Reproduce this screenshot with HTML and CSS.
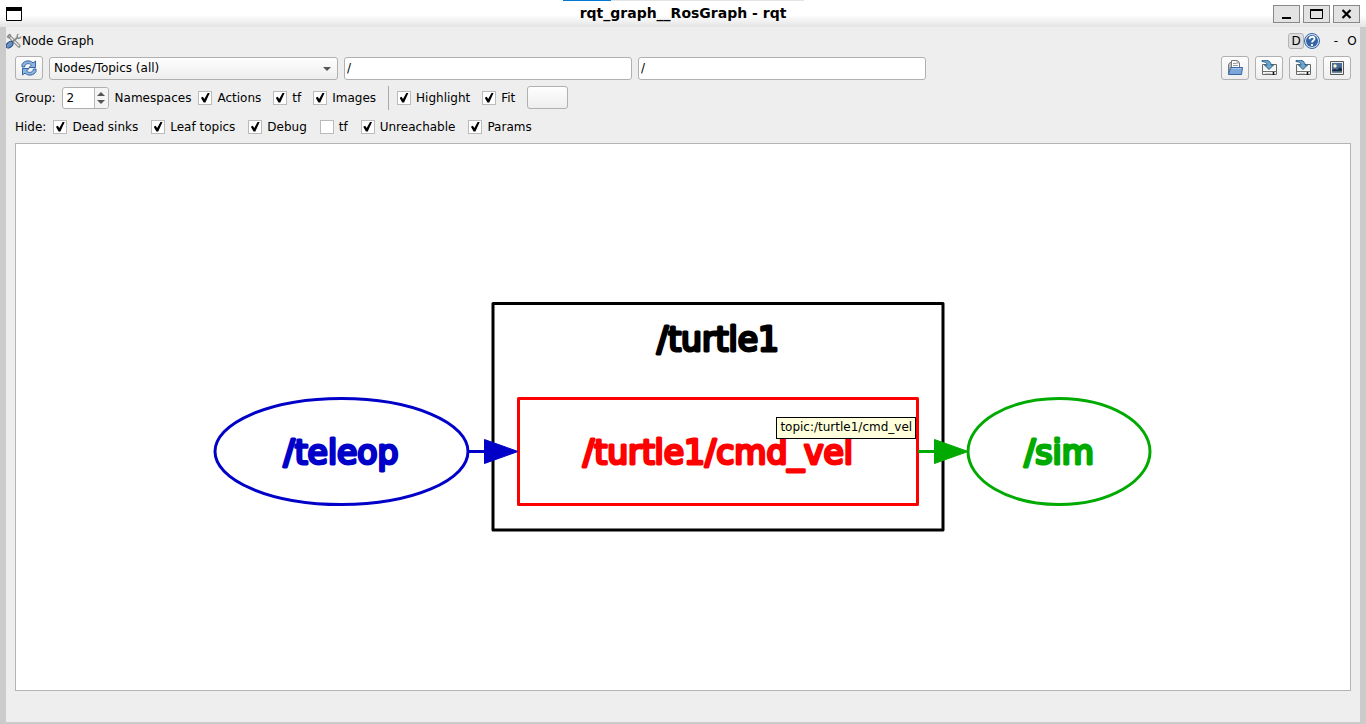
FILE: index.html
```html
<!DOCTYPE html>
<html lang="en">
<head>
<meta charset="utf-8">
<meta name="viewport" content="width=device-width, initial-scale=1">
<title>rqt_graph__RosGraph - rqt</title>
<link rel="stylesheet" href="styles.css">
</head>
<body>
<svg class="defs" width="0" height="0" aria-hidden="true">
  <symbol id="save" viewBox="0 0 16 16">
    <path d="M1.500 4.500H5M10 4.500H15.500V14.500H1.500V4.500" fill="#f4f4f2" stroke="#666b68"/>
    <path d="M3 10.500H14" stroke="#fff"/>
    <path d="M2 11.500H15" stroke="#6b706c"/>
    <path d="M4 13.500H10" stroke="#ccc"/>
    <path d="M12.500 12V15" stroke="#111" stroke-width="1.600"/>
    <path d="M1 .5C5-.5 10 .5 10 5H12.500L8 9.500 3.500 5H6C6 3 4 1.500 1 1.500Z" fill="#6fa5cb" stroke="#255f8d"/>
  </symbol>
</svg>
<div class="window">
  <header class="titlebar">
    <span class="progress"></span>
    <svg class="app-icon" width="16" height="14" viewBox="0 0 16 14"><path d="M.5.5H15.500V13.500H.5Z" fill="#fff" stroke="#000"/><path d="M0 0H16V4H0Z"/></svg>
    <h1 class="title">rqt_graph__RosGraph - rqt</h1>
    <div class="window-buttons">
      <button class="win-btn" aria-label="Minimize"><svg width="25" height="16" viewBox="0 0 25 16"><path d="M8 11H17V13H8Z"/></svg></button>
      <button class="win-btn" aria-label="Maximize"><svg width="25" height="16" viewBox="0 0 25 16"><path d="M6.500 3.500H18.500V12.500H6.500Z" fill="none" stroke="#000"/><path d="M6 3H19V5H6Z"/></svg></button>
      <button class="win-btn" aria-label="Close"><svg width="25" height="16" viewBox="0 0 25 16"><path d="M8.500 4L16.500 12M16.500 4L8.500 12" stroke="#000" stroke-width="2.200"/></svg></button>
    </div>
  </header>
  <div class="dock">
    <div class="dock-title">
      <svg width="16" height="16" viewBox="0 0 16 16"><path d="M3 3L13 13" stroke="#888a85" stroke-width="3.200" stroke-linecap="round"/><path d="M3 3L13 13" stroke="#eee" stroke-width="1.300"/><path d="M1 3.500C3 6 6 3 3.500 1" fill="none" stroke="#888a85" stroke-width="1.400"/><path d="M7 8.500L12 4" stroke="#888a85" stroke-width="1.800"/><path d="M12.500 1C10.500 2 11 4 12 5S14.500 5 15 3.500" fill="none" stroke="#888a85" stroke-width="1.300"/><ellipse cx="3.500" cy="11.800" rx="4" ry="2.600" transform="rotate(-42 3.500 11.800)" fill="#6d91bf" stroke="#204a87"/></svg>
      <span class="dock-name">Node Graph</span>
      <button class="mini raised">D</button>
      <button class="help" aria-label="Help"><svg width="16" height="16" viewBox="0 0 16 16"><circle cx="8" cy="8" r="7.500" fill="#d7e3f2" stroke="#3465a4"/><circle cx="8" cy="8" r="6" fill="#3465a4"/><path d="M5.500 6.200C5.500 3 10.700 3 10.500 6 10.400 7.500 8 7.600 8 9.600M8 11V13" fill="none" stroke="#fff" stroke-width="1.800"/></svg></button>
      <button class="mini dash">-</button>
      <button class="mini">O</button>
    </div>
    <div class="row row-main">
      <button class="tool" aria-label="Refresh graph"><svg width="16" height="16" viewBox="0 0 16 16"><path d="M1 7V4.500C3 .5 9-.5 12 3L14.500 1V7.500H8L10.500 5C8 2.500 4 3.500 3.500 7Z" fill="#8db4dd" stroke="#3465a4"/><path d="M15 9V11.500C13 15.500 7 16.500 4 13L1.500 15V8.500H8L5.500 11C8 13.500 12 12.500 12.500 9Z" fill="#8db4dd" stroke="#3465a4"/></svg></button>
      <div class="combo"><select aria-label="Graph type"><option>Nodes/Topics (all)</option></select></div>
      <input class="field" type="text" value="/" aria-label="Node filter">
      <input class="field" type="text" value="/" aria-label="Topic filter">
      <div class="file-tools">
        <button class="tool" aria-label="Open"><svg width="16" height="16" viewBox="0 0 16 16"><path d="M1.500 14V4.500L3 2.500H5" fill="#bbb" stroke="#777"/><path d="M4.500 9V.5H10.500L12.500 3V9Z" fill="#fff" stroke="#777"/><path d="M6 3.500H9.500M6 5.500H11M10 .5V3H12.500" fill="none" stroke="#999"/><path d="M3.500 7.500H15.500L14.500 14.500H1.500Z" fill="#7da7d9" stroke="#3465a4"/><path d="M4.500 8.500H14.500" stroke="#a9c7e8"/></svg></button>
        <button class="tool" aria-label="Save as DOT"><svg width="16" height="16"><use href="#save"/></svg></button>
        <button class="tool" aria-label="Save as SVG"><svg width="16" height="16"><use href="#save"/></svg></button>
        <button class="tool" aria-label="Save as image"><svg width="16" height="16" viewBox="0 0 16 16"><path d="M1.500 1.500H14.500V14.500H1.500Z" fill="#eee" stroke="#555753"/><path d="M3 3H13V12.500H3Z" fill="#4a6c9b"/><path d="M3 10L6 9 8 10 11 7 13 9V12.500H3Z" fill="#1b2a3e"/><path d="M3 12H13" stroke="#8ca8c4"/><circle cx="6" cy="6" r="1.700" fill="#fff6c0"/></svg></button>
      </div>
    </div>
    <div class="row row-group">
      <label for="depth">Group:</label>
      <div class="spin"><input id="depth" type="number" value="2"><span class="arrows"><i class="up"></i><i class="down"></i></span></div>
      <span class="namespaces">Namespaces</span>
      <div class="checks">
        <label class="check"><input type="checkbox" checked>Actions</label>
        <label class="check"><input type="checkbox" checked>tf</label>
        <label class="check"><input type="checkbox" checked>Images</label>
        <span class="divider"></span>
        <label class="check"><input type="checkbox" checked>Highlight</label>
        <label class="check"><input type="checkbox" checked>Fit</label>
        <button class="blank" aria-label="Fit in view"></button>
      </div>
    </div>
    <div class="row row-hide">
      <span class="hide-label">Hide:</span>
      <div class="checks">
        <label class="check"><input type="checkbox" checked>Dead sinks</label>
        <label class="check"><input type="checkbox" checked>Leaf topics</label>
        <label class="check"><input type="checkbox" checked>Debug</label>
        <label class="check"><input type="checkbox">tf</label>
        <label class="check"><input type="checkbox" checked>Unreachable</label>
        <label class="check"><input type="checkbox" checked>Params</label>
      </div>
    </div>
    <main class="canvas">
      <svg class="graph" viewBox="16 144 1334 546">
        <g class="shape black"><path d="M493 303.500H943V530H493Z"/><text x="718" y="351">/turtle1</text></g>
        <g class="shape red"><path d="M518.500 398.500H917.500V504.500H518.500Z"/><text x="718" y="464">/turtle1/cmd_vel</text></g>
        <g class="shape blue"><ellipse cx="341.500" cy="451.500" rx="126.500" ry="53"/><path d="M468 451.500H490"/><path class="head" d="M484.500 439.500L518 451.500 484.500 463.500Z"/><text x="341" y="464">/teleop</text></g>
        <g class="shape green"><ellipse cx="1059" cy="451.500" rx="91" ry="53"/><path d="M918 451.500H940"/><path class="head" d="M934.500 439.500L968 451.500 934.500 463.500Z"/><text x="1059" y="464">/sim</text></g>
      </svg>
      <div class="tooltip" role="tooltip">topic:/turtle1/cmd_vel</div>
    </main>
  </div>
</div>
</body>
</html>
```
FILE: styles.css
```css
* { box-sizing: border-box; }

body {
  margin: 0;
  background: #cbcbcb;
  color: #000;
  font-family: "DejaVu Sans", sans-serif;
  font-size: 12px;
  line-height: 14px;
}

button, input, select { font: inherit; color: inherit; margin: 0; }
button { padding: 0; }
svg { display: block; }
.defs { position: absolute; }

.window { display: flex; flex-direction: column; height: 100vh; }

.titlebar {
  position: relative;
  display: grid;
  grid-template-columns: 1fr auto 1fr;
  align-items: center;
  height: 27px;
  padding: 0 6px;
  background: linear-gradient(#fff 0, #fff 55%, #e4e4e4 100%);
}
.title { margin: 0; font-size: 14px; line-height: 27px; font-weight: bold; }
.window-buttons { display: flex; gap: 3px; justify-self: end; padding-top: 1px; }
.win-btn { border: 1px solid #888; background: #e3e3e3; }

.progress {
  position: absolute;
  top: 0;
  left: 50%;
  width: 241px;
  height: 1px;
  margin-left: -120px;
  background: linear-gradient(90deg, #0078d7 48px, #e4e4e4 48px);
}

.dock {
  flex: 1;
  display: flex;
  flex-direction: column;
  min-height: 0;
  margin: 0 6px 2px;
  padding: 0 9px 31px;
  background: #eee;
}

.dock-title { display: flex; align-items: center; height: 27px; margin: 0 -9px; }
.dock-name { flex: 1; }
.mini { border: 0; background: none; height: 16px; min-width: 16px; }
.raised { border: 1px solid #b4b4b4; border-radius: 3px; background: #dedede; line-height: 14px; }
.help { border: 0; background: none; }
.dash { margin-left: 8px; }

.row { display: flex; align-items: center; }
.row-main { gap: 6px; height: 28px; }
.row-group { height: 31px; }
.row-hide { height: 27px; }

.tool, .combo, .field, .spin, .blank {
  border: 1px solid #b0b0b0;
  border-radius: 3px;
  background: linear-gradient(#fefefe, #eee);
}
.tool { display: grid; place-items: center; width: 28px; height: 24px; flex: none; }
.combo { position: relative; flex: 0 1 289px; height: 23px; }
.combo select {
  display: block;
  width: 100%;
  height: 20px;
  padding: 0 4px;
  border: 0;
  background: none;
  appearance: none;
}
.combo::after {
  content: "";
  position: absolute;
  top: 9px;
  right: 6px;
  border: 4px solid transparent;
  border-top-color: #555;
  border-bottom: 0;
  pointer-events: none;
}
.field { flex: 0 1 288px; min-width: 0; height: 23px; padding: 0 2px; background: #fff; }
.file-tools { display: flex; gap: 6px; margin-left: auto; }

.spin {
  display: flex;
  width: 47px;
  height: 22px;
  margin: 0 6px;
  background: #fff;
  overflow: hidden;
}
.spin input { flex: 1; min-width: 0; padding: 0 4px; border: 0; background: none; appearance: textfield; }
.spin input::-webkit-inner-spin-button { appearance: none; }
.arrows {
  display: flex;
  flex-direction: column;
  align-items: center;
  justify-content: center;
  gap: 4px;
  width: 14px;
  border-left: 1px solid #b9b9b9;
  background: #f4f4f4;
}
.up, .down { border: 4px solid transparent; }
.up { border-top: 0; border-bottom-color: #555; }
.down { border-bottom: 0; border-top-color: #555; }

.namespaces { margin-right: 7px; }
.hide-label { margin-right: 7px; }
.checks { display: flex; align-items: center; gap: 12px; }
.check { display: flex; align-items: center; gap: 5px; }
.row-hide .checks { gap: 13px; }
.check input {
  display: grid;
  place-items: center;
  width: 14px;
  height: 14px;
  border: 1px solid #bbb;
  background: #fff;
  appearance: none;
}
.check input:checked::before {
  content: "";
  width: 9px;
  height: 10px;
  background: #000;
  clip-path: polygon(0 52%, 22% 42%, 38% 66%, 78% 0, 100% 0, 50% 100%, 30% 100%);
}
.divider { width: 1px; height: 24px; background: #aaa; margin-right: -4px; }
.blank { width: 41px; height: 23px; }

.canvas {
  position: relative;
  flex: 1;
  min-height: 0;
  margin-top: 3px;
  border: 1px solid #b4b4b4;
  background: #fff;
}
.graph { width: 100%; height: 100%; }
.shape { fill: none; stroke-width: 3; stroke-linejoin: round; }
.shape text { font-size: 33px; text-anchor: middle; }
.shape .head { stroke-width: 1; }
.black { stroke: #000; }
.red { stroke: #f00; }
.blue { stroke: #0000c8; }
.green { stroke: #00aa00; }
.black text { fill: #000; }
.red text { fill: #f00; }
.blue text, .blue .head { fill: #0000c8; }
.green text, .green .head { fill: #00aa00; }

.tooltip {
  position: absolute;
  left: 57%;
  bottom: 46%;
  padding: 3px 3px 4px;
  border: 1px solid #000;
  background: #ffffdc;
  line-height: 13px;
}
```
